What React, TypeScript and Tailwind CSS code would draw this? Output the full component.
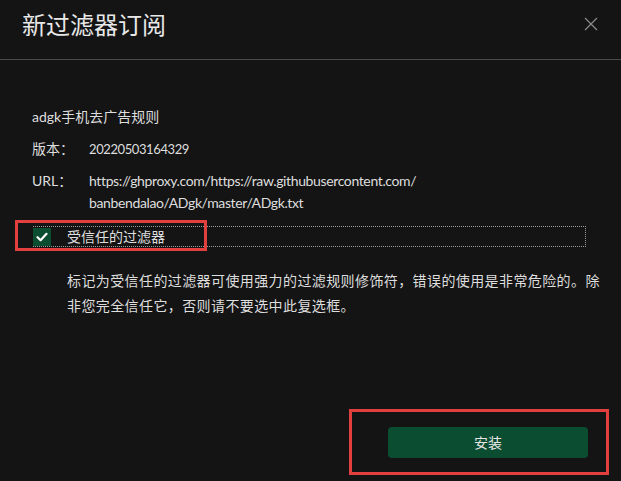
import React from 'react';

const CloseIcon = () => (
  <svg width="14" height="14" viewBox="0 0 14 14" className="mt-[8px] mr-[1px]">
    <path d="M1 1 L13 13 M13 1 L1 13" stroke="#8a8a8a" strokeWidth="1.2" />
  </svg>
);

const CheckMark = () => (
  <svg width="12" height="12" viewBox="0 0 12 12">
    <path d="M1.5 6.2 L4.6 9.2 L10.5 2.8" fill="none" stroke="#ffffff" strokeWidth="2.2" strokeLinecap="round" strokeLinejoin="round" />
  </svg>
);

const App: React.FC = () => {
  return (
    <div className="relative w-[621px] h-[481px] overflow-hidden bg-[#141414] font-['Lato','Noto_Sans_CJK_SC',sans-serif] flex flex-col">
      <div className="h-[60px] shrink-0 border-b border-[#4a4a4a] pl-[22px] pr-[22px] pt-[9px] flex justify-between">
        <h1 className="text-[24px] leading-8 text-[#e8e8e8] font-normal">新过滤器订阅</h1>
        <CloseIcon />
      </div>

      <div className="pl-[32px] pt-[46px] text-[14px] leading-[22px] text-[#dedede]">
        <div>adgk手机去广告规则</div>
        <div className="mt-[10px] flex">
          <span className="w-[57px] shrink-0">版本：</span>
          <span className="text-[13px] tracking-[-0.4px]">20220503164329</span>
        </div>
        <div className="mt-[10px] flex">
          <span className="w-[57px] shrink-0">URL：</span>
          <div className="tracking-[-0.37px]">
            <div>https://ghproxy.com/https://raw.githubusercontent.com/</div>
            <div>banbendalao/ADgk/master/ADgk.txt</div>
          </div>
        </div>

        <div className="mt-[12px] ml-px w-[553px] h-[21px] border border-dotted border-[#9a9a9a] flex items-center">
          <div className="w-[18px] h-[18px] bg-[#0b4d30] flex items-center justify-center -ml-px">
            <CheckMark />
          </div>
          <span className="ml-[16px] leading-[20px]">受信任的过滤器</span>
        </div>

        <p className="mt-[21px] ml-[35px] leading-[25px] tracking-[0.4px] whitespace-nowrap">
          标记为受信任的过滤器可使用强力的过滤规则修饰符，错误的使用是非常危险的。除
          <br />
          非您完全信任它，否则请不要选中此复选框。
        </p>
      </div>

      <div className="mt-auto flex justify-end pr-[33px] pb-[23px]">
        <button className="w-[200px] h-[31px] rounded-[4px] bg-[#0b4d30] text-[14px] text-[#e6e6e6]">
          安装
        </button>
      </div>

      <div className="absolute left-[15px] top-[220px] w-[192px] h-[31px] border-[3px] border-[#e2403f] pointer-events-none" />
      <div className="absolute left-[349px] top-[409px] w-[260px] h-[66px] border-[3px] border-[#e2403f] pointer-events-none" />
    </div>
  );
};

export default App;
